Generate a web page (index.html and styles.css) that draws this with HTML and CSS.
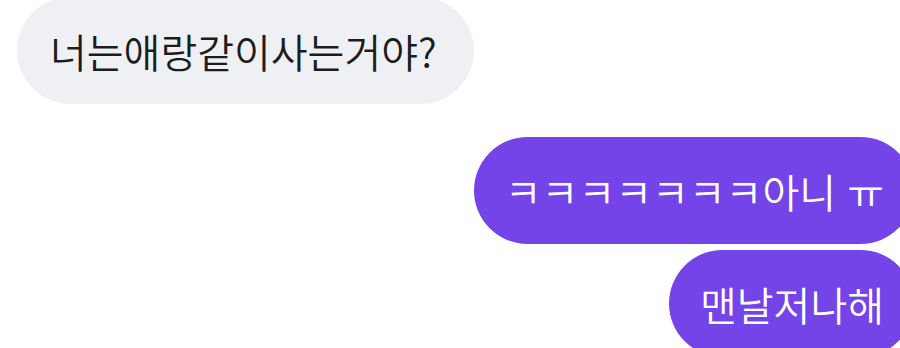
FILE: index.html
```html
<!DOCTYPE html>
<html lang="ko">
<head>
    <meta charset="UTF-8">
    <meta name="viewport" content="width=device-width, initial-scale=1.0">
    <title>채팅</title>
    <link rel="stylesheet" href="styles.css">
</head>
<body>

<div class="chat">
    <div class="row in">
        <div class="bubble gray">너는애랑같이사는거야?</div>
    </div>
    <div class="row out first">
        <div class="bubble purple">ㅋㅋㅋㅋㅋㅋㅋ아니 ㅠ</div>
    </div>
    <div class="row out">
        <div class="bubble purple">맨날저나해</div>
    </div>
</div>

</body>
</html>
```

FILE: styles.css
```css
* {
    box-sizing: border-box;
}
html, body {
    margin: 0;
    height: 348px;
    overflow: hidden;
    background: #fff;
}
body {
    font-family: "Noto Sans CJK KR", "Noto Sans", sans-serif;
}
.chat {
    display: flex;
    flex-direction: column;
    margin-top: -3px;
    padding-left: 17px;
    margin-right: -14px;
}
.row {
    display: flex;
}
.row.out {
    justify-content: flex-end;
    margin-top: 6px;
}
.row.out.first {
    margin-top: 33px;
}
.bubble {
    height: 107px;
    display: flex;
    align-items: center;
    border-radius: 54px;
    font-size: 40px;
    font-weight: 350;
    line-height: 1;
}
.gray {
    background: #eff0f4;
    color: #1c1c1e;
    padding: 0 37px 0 33px;
}
.purple {
    background: #7444e8;
    color: #fff;
    padding: 0 30px 0 31px;
}
```
